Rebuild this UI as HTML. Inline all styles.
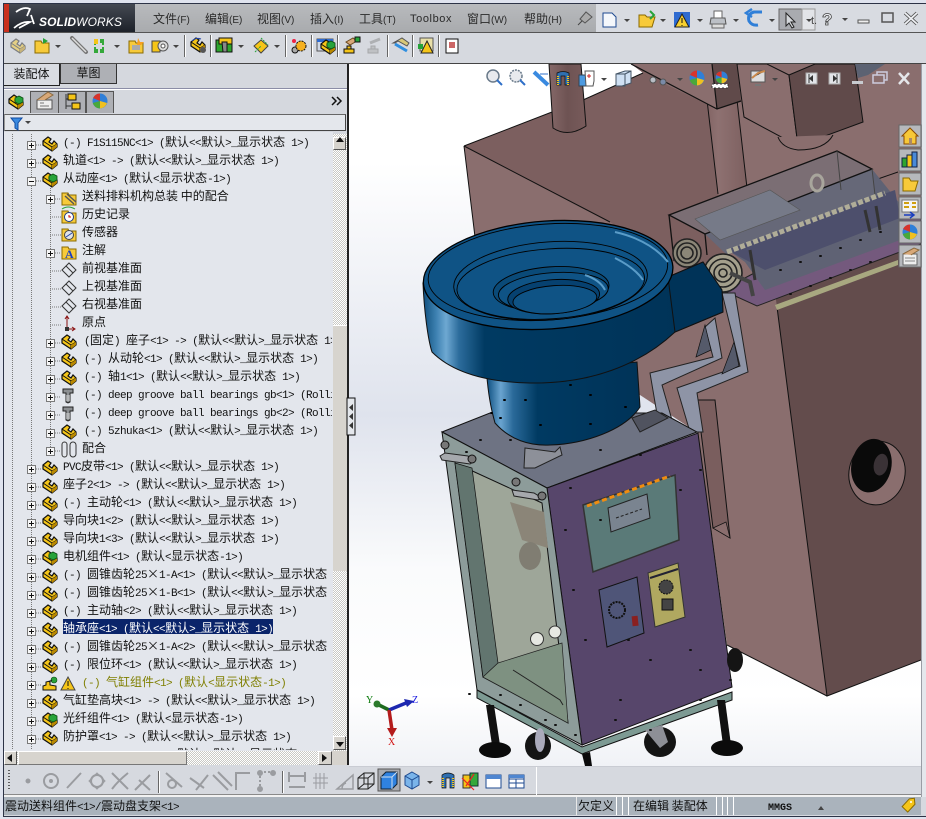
<!DOCTYPE html>
<html><head><meta charset="utf-8"><style>
html,body{margin:0;padding:0;width:926px;height:819px;overflow:hidden;background:#d6d9df}
body{position:relative;font-family:"Liberation Sans","WenQuanYi Zen Hei","Noto Sans CJK SC",sans-serif;color:#111}
.a{position:absolute}
.m{position:absolute;top:10px;font-size:12px;line-height:18px;color:#2a2a2a;white-space:nowrap}
.m i{font-style:normal;font-size:10px}
#tree{position:absolute;left:0;top:0;width:926px;height:819px;clip-path:inset(134px 594px 69px 5px);font-family:"WenQuanYi Zen Hei","Noto Sans CJK SC",sans-serif;font-size:12px;color:#111}
#tree div{position:absolute;height:18px;line-height:18px;white-space:pre}
#tree i,.st i{font:11px "Liberation Mono",monospace;letter-spacing:-.6px}
#tree b{display:inline-block;width:12px;text-align:center;font-weight:normal}
.st{position:absolute;font-family:"WenQuanYi Zen Hei","Noto Sans CJK SC",sans-serif;font-size:12px;line-height:16px;white-space:pre;color:#111}
.hatch{background:repeating-conic-gradient(#fff 0 25%,#c9c9c4 0 50%) 0 0/2px 2px}
</style></head><body>
<!-- window frame -->
<div class="a" style="left:0;top:0;width:926px;height:3px;background:#dfe3ee"></div>
<div class="a" style="left:0;top:3px;width:926px;height:1px;background:#2c3346"></div>
<div class="a" style="left:0;top:0;width:3px;height:819px;background:#dfe3ee"></div>
<div class="a" style="left:3px;top:3px;width:1px;height:814px;background:#2c3346"></div>
<div class="a" style="left:0;top:817px;width:926px;height:2px;background:#dfe3ee"></div>
<div class="a" style="left:3px;top:816px;width:923px;height:1px;background:#2c3346"></div>
<!-- title -->
<div class="a" style="left:135px;top:4px;width:461px;height:28px;background:linear-gradient(#b8babd,#a9abae)"></div>
<div class="a" style="left:596px;top:4px;width:330px;height:28px;background:#d8dbe1"></div>
<div class="a" style="left:4px;top:4px;width:131px;height:28px;background:linear-gradient(#444952,#1d2129)"></div>
<div class="a" style="left:4px;top:4px;width:5px;height:28px;background:#c9301f"></div>
<div class="a" style="left:39px;top:15px;font:bold italic 12px 'Liberation Sans',sans-serif;color:#fff;letter-spacing:.1px;white-space:nowrap">SOLID<span style="font-weight:normal">WORKS</span></div>
<div class="a" style="left:4px;top:32px;width:922px;height:1px;background:#555"></div>
<div class="m" style="left:153px">文件<i>(F)</i></div>
<div class="m" style="left:205px">编辑<i>(E)</i></div>
<div class="m" style="left:257px">视图<i>(V)</i></div>
<div class="m" style="left:310px">插入<i>(I)</i></div>
<div class="m" style="left:359px">工具<i>(T)</i></div>
<div class="m" style="left:410px;font-size:11px;letter-spacing:.6px">Toolbox</div>
<div class="m" style="left:467px">窗口<i>(W)</i></div>
<div class="m" style="left:524px">帮助<i>(H)</i></div>
<div class="a" style="left:4px;top:63px;width:922px;height:1px;background:#444"></div>
<!-- left panel -->
<div class="a" style="left:4px;top:64px;width:343px;height:702px;background:#d5d8de"></div>
<div class="a" style="left:347px;top:64px;width:2px;height:702px;background:#222"></div>
<div class="a" style="left:4px;top:64px;width:55px;height:21px;background:#d9dce2;border-right:1px solid #222;border-bottom:1px solid #222;box-sizing:content-box"></div>
<div class="a" style="left:60px;top:64px;width:55px;height:19px;background:#aeb0b5;border:1px solid #333;border-top:0;font:12px/19px 'WenQuanYi Zen Hei',sans-serif;text-align:center">草图</div>
<div class="a" style="left:4px;top:64px;width:55px;font:12px/21px 'WenQuanYi Zen Hei',sans-serif;text-align:center">装配体</div>
<div class="a" style="left:4px;top:88px;width:343px;height:1px;background:#8b8da6"></div>
<div class="a" style="left:4px;top:89px;width:343px;height:1px;background:#fff"></div>
<div class="a" style="left:30px;top:91px;width:27px;height:21px;background:#aeb0b5;border:1px solid #555;border-bottom:0"></div>
<div class="a" style="left:58px;top:91px;width:26px;height:21px;background:#aeb0b5;border:1px solid #555;border-bottom:0"></div>
<div class="a" style="left:86px;top:91px;width:26px;height:21px;background:#aeb0b5;border:1px solid #555;border-bottom:0"></div>
<div class="a" style="left:4px;top:114px;width:342px;height:17px;background:#e4e7ec;border-top:1px solid #666;border-bottom:1px solid #444;border-left:1px solid #999;border-right:1px solid #444;box-sizing:border-box"></div>
<div class="a" style="left:4px;top:132px;width:329px;height:619px;background:#e3e6ec"></div>
<!-- scrollbars -->
<div class="a hatch" style="left:333px;top:134px;width:14px;height:617px"></div>
<div class="a" style="left:333px;top:325px;width:14px;height:245px;background:#d7d4ce;border-top:1px solid #fff"></div>
<div class="a" style="left:333px;top:137px;width:13px;height:13px;background:#d6d3cd;border:1px solid;border-color:#fff #555 #555 #fff;box-sizing:border-box"></div>
<div class="a" style="left:333px;top:736px;width:13px;height:14px;background:#d6d3cd;border:1px solid;border-color:#fff #555 #555 #fff;box-sizing:border-box"></div>
<div class="a hatch" style="left:4px;top:751px;width:329px;height:14px"></div>
<div class="a" style="left:18px;top:751px;width:169px;height:14px;background:#d7d4ce;border:1px solid;border-color:#fff #777 #777 #fff;box-sizing:border-box"></div>
<div class="a" style="left:4px;top:751px;width:13px;height:14px;background:#d6d3cd;border:1px solid;border-color:#fff #555 #555 #fff;box-sizing:border-box"></div>
<div class="a" style="left:318px;top:751px;width:14px;height:14px;background:#d6d3cd;border:1px solid;border-color:#fff #555 #555 #fff;box-sizing:border-box"></div>
<div class="a" style="left:332px;top:751px;width:15px;height:14px;background:#d6d3cd"></div>
<!-- bottom -->
<div class="a" style="left:4px;top:765px;width:922px;height:32px;background:#d6d9df"></div>
<div class="a" style="left:4px;top:794px;width:922px;height:1px;background:#8a8a8a"></div>
<div class="a" style="left:4px;top:795px;width:922px;height:2px;background:#f2f2f2"></div>
<div class="a" style="left:536px;top:766px;width:1px;height:29px;background:#fff"></div>
<div class="a" style="left:4px;top:797px;width:917px;height:18px;background:#aab3bc"></div>
<div class="a" style="left:576px;top:797px;width:1px;height:18px;background:#e8e8e8"></div>
<div class="a" style="left:616px;top:797px;width:1px;height:18px;background:#fff"></div>
<div class="a" style="left:622px;top:797px;width:1px;height:18px;background:#fff"></div>
<div class="a" style="left:628px;top:797px;width:1px;height:18px;background:#fff"></div>
<div class="a" style="left:716px;top:797px;width:1px;height:18px;background:#fff"></div>
<div class="a" style="left:722px;top:797px;width:1px;height:18px;background:#fff"></div>
<div class="a" style="left:727px;top:797px;width:1px;height:18px;background:#fff"></div>
<div class="a" style="left:733px;top:797px;width:1px;height:18px;background:#fff"></div>
<div class="st" style="left:5px;top:798px">震动送料组件<i>&lt;1&gt;/</i>震动盘支架<i>&lt;1&gt;</i></div>
<div class="st" style="left:578px;top:798px">欠定义</div>
<div class="st" style="left:633px;top:798px">在编辑 装配体</div>
<div class="st" style="left:768px;top:798px"><i style="font-size:10px;font-weight:bold;letter-spacing:0">MMGS</i></div>

<!-- viewport scene -->
<svg class="a" style="left:349px;top:64px" width="572" height="702" viewBox="349 64 572 702" xmlns="http://www.w3.org/2000/svg">
<defs>
<linearGradient id="bg" x1="0" y1="64" x2="0" y2="766" gradientUnits="userSpaceOnUse"><stop offset="0" stop-color="#fff"/><stop offset=".14" stop-color="#fff"/><stop offset=".5" stop-color="#dfe3ed"/><stop offset=".72" stop-color="#fafbfc"/><stop offset=".9" stop-color="#fff"/><stop offset="1" stop-color="#f0f2f6"/></linearGradient>
<linearGradient id="bw" x1="423" y1="0" x2="680" y2="0" gradientUnits="userSpaceOnUse"><stop offset="0" stop-color="#0f4d7c"/><stop offset=".05" stop-color="#3c80b0"/><stop offset=".09" stop-color="#6ea8d2"/><stop offset=".14" stop-color="#2c6c9c"/><stop offset=".24" stop-color="#003a62"/><stop offset="1" stop-color="#003358"/></linearGradient>
<linearGradient id="nk" x1="487" y1="0" x2="640" y2="0" gradientUnits="userSpaceOnUse"><stop offset="0" stop-color="#0d4f80"/><stop offset=".09" stop-color="#6aa4cf"/><stop offset=".17" stop-color="#2a6a9a"/><stop offset=".33" stop-color="#003a62"/><stop offset="1" stop-color="#003358"/></linearGradient>
<linearGradient id="col" x1="700" y1="0" x2="745" y2="0" gradientUnits="userSpaceOnUse"><stop offset="0" stop-color="#7a5c5c"/><stop offset=".4" stop-color="#8e7171"/><stop offset="1" stop-color="#7e6161"/></linearGradient>
<linearGradient id="pole" x1="549" y1="0" x2="586" y2="0" gradientUnits="userSpaceOnUse"><stop offset="0" stop-color="#856868"/><stop offset=".5" stop-color="#6e5353"/><stop offset="1" stop-color="#785b5b"/></linearGradient>
</defs>
<rect x="349" y="64" width="572" height="702" fill="url(#bg)"/>
<!-- big brown -->
<path d="M464 146L660 64H921V660L827 696L727 645L698 433L640 395L500 400L475 237Z" fill="#8a6e6e"/>
<path d="M464 146L643 73L631 64H640L667 85L717 109L718 193L735 300L610 222Z" fill="#7c5f5f"/>
<path d="M631 64L716 108L741 101L737 64Z" fill="#8a6e6e"/>
<path d="M583 64H631L643 73L583 100Z" fill="#fff"/>
<path d="M349 64H583V100L464 146L475 237L420 237V300H349Z" fill="url(#bg)"/>
<path d="M464 146L583 100L643 73" fill="none" stroke="#111" stroke-width="1"/>
<path d="M464 146L610 222M464 146L475 237" fill="none" stroke="#111"/>
<!-- pole -->
<path d="M549 64L553 128Q568 138 586 126L581 64Z" fill="url(#pole)" stroke="#111"/>
<!-- column -->
<path d="M707 100L718 194L747 188L737 100Z" fill="url(#col)"/>
<path d="M707 100L718 194M737 100L747 188" stroke="#111" fill="none"/>
<!-- upper blocks -->
<path d="M631 64L717 109L741 101L737 64Z" fill="#8a6e6e"/>
<path d="M712 64L717 109L741 101L737 64Z" fill="#604a4a"/>
<path d="M631 64L717 109L741 101M712 64L717 109" stroke="#111" fill="none" stroke-width="1.200"/>
<path d="M737 64L744 117L798 146L789 75L767 64Z" fill="#8a6e6e" stroke="#111"/>
<path d="M789 75L798 146L863 122L855 64H815Z" fill="#604a4a" stroke="#111"/>
<path d="M778 137Q782 148 798 150Q825 150 833 135" fill="#8a6e6e" stroke="#111"/>
<path d="M855 64L885 64L868 75L858 78Z" fill="#5c6272"/>
<!-- right dark face -->
<path d="M775 292L921 235V660L827 696Z" fill="#634c4c"/>
<path d="M777 307L827 696L921 660M727 645L827 696" stroke="#111" fill="none"/>
<path d="M875 180L898 172" stroke="#111"/>
<!-- slab -->
<path d="M697 400L713 528L730 538L715 400Z" fill="#7a5e5e" stroke="#111"/>
<path d="M713 528L726 522L730 538Z" fill="#8a6e6e" stroke="#111" stroke-width=".7"/>
<!-- hole -->
<g transform="rotate(12 877 473)"><ellipse cx="877" cy="473" rx="28" ry="32" fill="#8a6e6e" stroke="#111"/><ellipse cx="870" cy="467" rx="20" ry="27" fill="#0a0a0a"/><ellipse cx="879" cy="464" rx="7" ry="11" fill="#3a3236"/></g>
<!-- plate & conveyor -->
<path d="M722 290L757 306L921 244V214L898 218L760 270Z" fill="#74597d" stroke="#222"/>
<path d="M775 305L898 260V265L777 310Z" fill="#a8a880"/>
<path d="M669 215L837 151L872 169L905 210L900 240L765 290L745 262L705 234Z" fill="#5f6274"/>
<path d="M705 234L872 169L875 195L727 255Z" fill="#666878"/>
<path d="M727 250L895 190L900 218L765 270Z" fill="#4d4f6c"/>
<path d="M669 215L837 151L872 169L705 234Z" fill="#7b6e74" stroke="#111" stroke-width="1.300"/>
<path d="M669 215L674 260L690 250M705 234L707 255" fill="none" stroke="#111" stroke-width="1.300"/>
<path d="M837 151L841 190M872 169L875 195" stroke="#444"/>
<path d="M695 219L770 190L800 210L720 240Z" fill="#767a88" stroke="#555" stroke-width=".6"/>
<ellipse cx="817" cy="183" rx="6" ry="8" fill="none" stroke="#a8a59c" stroke-width="3"/>
<path d="M727 252L885 193" stroke="#b0ad98" stroke-width="5" stroke-dasharray="5 2"/>
<g fill="none" stroke="#222" stroke-width="1.600">
<circle cx="687" cy="253" r="14" fill="#8b8677"/><circle cx="687" cy="253" r="10"/><circle cx="687" cy="253" r="6"/>
<circle cx="723" cy="273" r="19" fill="#a49f8c"/><circle cx="723" cy="273" r="14"/><circle cx="723" cy="273" r="9"/><circle cx="723" cy="273" r="4"/>
</g>
<path d="M730 273L750 282L753 296" fill="none" stroke="#444" stroke-width="4"/>
<path d="M750 250L755 280M865 210L870 232M876 206L880 230" stroke="#333" stroke-width="3"/>
<path d="M790 294h1M810 286h1M830 278h1M850 270h1M870 262h1M780 270h1M800 262h1M820 256h1M840 248h1M860 240h1M880 232h1" stroke="#111" stroke-width="2" stroke-linecap="round"/>
<!-- brackets -->
<path d="M650 373L713 357L705 327L715 318L722 358L662 385L672 420L658 420Z" fill="#8e94a6" stroke="#222"/>
<path d="M722 293L735 293L748 372L697 393L703 432L690 432L677 388L740 366Z" fill="#8e94a6" stroke="#222"/>
<path d="M696 357L705 325L711 350Z" fill="#555a6a" stroke="#111" stroke-width=".7"/>
<path d="M722 374L734 342L739 366Z" fill="#555a6a" stroke="#111" stroke-width=".7"/>
<!-- cabinet -->
<path d="M442 432L490 413H662L697 432L547 488Z" fill="#6e7383" stroke="#111"/>
<path d="M547 488L698 433L732 687L582 745Z" fill="#57466b" stroke="#111"/>
<path d="M442 432L547 488L582 745L477 690Z" fill="#8d9c9a" stroke="#111"/>
<path d="M455 463L542 503L568 723L483 677Z" fill="#9ea699" stroke="#111"/>
<path d="M455 463L472 468L498 663L483 677Z" fill="#62756f" stroke="#111" stroke-width=".7"/>
<path d="M498 663L562 643L568 723L483 677Z" fill="#7e9181" stroke="#222" stroke-width=".7"/>
<path d="M513 670L560 700L563 705" fill="none" stroke="#222"/>
<path d="M510 502L544 512L548 548L522 540Z" fill="#8b8578"/>
<ellipse cx="530" cy="556" rx="11" ry="14" fill="#807d72"/>
<circle cx="537" cy="639" r="6.500" fill="#e6e8e2" stroke="#333"/><circle cx="555" cy="632" r="6" fill="#e6e8e2" stroke="#333"/>
<path d="M477 690L582 747L732 692V700L582 754L477 698Z" fill="#7d9a93" stroke="#111"/>
<!-- handles -->
<path d="M440 456L445 453L468 456L473 462L470 464L442 460Z" fill="#a6a9ad" stroke="#222"/>
<path d="M512 490L534 493L542 498L538 500L514 496Z" fill="#a6a9ad" stroke="#222"/>
<circle cx="445" cy="445" r="4" fill="#777" stroke="#111"/><circle cx="472" cy="459" r="4" fill="#777" stroke="#111"/><circle cx="516" cy="482" r="4" fill="#777" stroke="#111"/><circle cx="542" cy="496" r="4" fill="#777" stroke="#111"/>
<path d="M525 448L555 452L560 447L562 455L535 468H524Z" fill="#8d9099" stroke="#222"/>
<path d="M632 418L655 410L668 418L640 432Z" fill="#50535f" stroke="#222"/>
<!-- panels -->
<path d="M583 505L675 475L679 540L593 572Z" fill="#5a7a78" stroke="#333" stroke-width="1.500"/>
<path d="M587 506L670 476" stroke="#f08c10" stroke-width="3" stroke-dasharray="5 3"/>
<path d="M608 508L647 494L650 518L611 532Z" fill="#7a8490" stroke="#222"/>
<path d="M616 518L642 509" stroke="#222" stroke-dasharray="3 2"/>
<path d="M599 590L637 577L644 633L607 647Z" fill="#4f5578" stroke="#111"/>
<circle cx="617" cy="610" r="8" fill="none" stroke="#111" stroke-width="2" stroke-dasharray="2 1"/>
<rect x="632" y="616" width="6" height="10" fill="#8a2020" transform="rotate(-6 635 620)"/>
<path d="M648 573L678 563L685 617L655 627Z" fill="#b0a860" stroke="#333"/>
<path d="M650 578L678 569" stroke="#223" stroke-width="2"/>
<circle cx="666" cy="587" r="7" fill="#444" stroke="#111" stroke-dasharray="2 1"/>
<rect x="662" y="599" width="11" height="11" fill="#444" stroke="#111"/>
<!-- feet -->
<path d="M486 705L492 745H500L494 705Z" fill="#111"/><ellipse cx="495" cy="750" rx="16" ry="8" fill="#0b0b0b"/>
<path d="M717 700L723 745H731L725 700Z" fill="#111"/><ellipse cx="727" cy="748" rx="16" ry="8" fill="#0b0b0b"/>
<ellipse cx="538" cy="746" rx="13" ry="14" fill="#141414"/><ellipse cx="540" cy="740" rx="5" ry="12" fill="#aab"/>
<ellipse cx="660" cy="742" rx="16" ry="15" fill="#141414"/><path d="M645 730L662 725L668 742L660 748Z" fill="#8d8f96"/>
<ellipse cx="735" cy="660" rx="8" ry="12" fill="#141414"/>
<path d="M582 754L585 766H592L590 752Z" fill="#0a0a0a"/>
<path d="M469 694h1M500 695h1M520 705h1M545 720h1M555 725h1M575 735h1M600 520h1M565 530h1M573 590h1M585 640h1M628 640h1M650 660h1M690 650h1M700 670h1M730 680h1M620 700h1M615 720h1M650 730h1M700 700h1M680 490h1M700 470h1M570 488h1M600 450h1M640 455h1M510 440h1M466 452h1M480 440h1" stroke="#111" stroke-width="2" stroke-linecap="round"/>
<!-- bowl -->
<path d="M487 378C489 400 492 412 495 423C510 440 530 446 550 445C585 444 625 430 640 407L637 362Z" fill="url(#nk)" stroke="#111"/>
<path d="M423 283C424 310 428 340 432 352C450 370 480 382 530 383C590 384 640 365 675 332L723 312L722 290L703 262L668 277Z" fill="url(#bw)" stroke="#111"/>
<path d="M668 277L703 262L722 290L723 312L675 332Z" fill="#003358" stroke="#111"/>
<g transform="rotate(-4 548 273)" fill="#0f5385" stroke="#000" stroke-width=".9">
<ellipse cx="548" cy="275" rx="125" ry="54" stroke-width="1.300"/>
<ellipse cx="548" cy="272" rx="120" ry="48"/>
<ellipse cx="550" cy="281" rx="97" ry="39"/><ellipse cx="550" cy="284" rx="94" ry="35"/>
<ellipse cx="550" cy="289" rx="58" ry="22" fill="#0a4a78"/><ellipse cx="552" cy="292" rx="55" ry="19"/>
<ellipse cx="552" cy="297" rx="46" ry="17" fill="#064170"/><ellipse cx="553" cy="300" rx="42" ry="14"/>
</g>
<path d="M615 232Q650 240 668 262M615 258Q635 268 643 280M585 275Q600 280 605 290" fill="none" stroke="#5a9cc8" stroke-width="2"/>
<path d="M504 400h1M525 400h1M570 385h1M590 395h1M625 407h1M540 425h1M590 424h1M500 418h1M491 413h1" stroke="#000" stroke-width="2" stroke-linecap="round"/>
<!-- triad -->
<path d="M389 710L377 704" stroke="#1e6a1e" stroke-width="3.500"/><circle cx="377" cy="704" r="3.500" fill="#2c7a2c"/>
<path d="M389 710L406 703" stroke="#1d28b0" stroke-width="3.500"/><path d="M404 699L414 701L407 707Z" fill="#1d28b0"/>
<path d="M389 710L392 730" stroke="#b41c1c" stroke-width="3.500"/><path d="M387 728L397 728L392 737Z" fill="#b41c1c"/>
<text x="366" y="703" font-family="Liberation Serif,serif" font-size="10" fill="#0a7a0a">Y</text>
<text x="412" y="703" font-family="Liberation Serif,serif" font-size="10" fill="#1a1ae0">Z</text>
<text x="388" y="745" font-family="Liberation Serif,serif" font-size="10" fill="#d01010">X</text>
</svg>
<div class="a" style="left:921px;top:64px;width:1px;height:733px;background:#9a9da5"></div>
<div class="a" style="left:922px;top:64px;width:4px;height:733px;background:#e4e7ec"></div>
<div class="a" style="left:349px;top:766px;width:572px;height:1px;background:#c9ccd3"></div>

<!-- tree text -->
<div id="tree">
<div style="left:63px;top:133px"><i>(-) F1S115NC&lt;1&gt; (</i>默认<i>&lt;&lt;</i>默认<i>&gt;_</i>显示状态<i> 1&gt;)</i></div>
<div style="left:63px;top:151px">轨道<i>&lt;1&gt; -&gt; (</i>默认<i>&lt;&lt;</i>默认<i>&gt;_</i>显示状态<i> 1&gt;)</i></div>
<div style="left:63px;top:169px">从动座<i>&lt;1&gt; (</i>默认<i>&lt;</i>显示状态<i>-1&gt;)</i></div>
<div style="left:82px;top:187px">送料排料机构总装 中的配合</div>
<div style="left:82px;top:205px">历史记录</div>
<div style="left:82px;top:223px">传感器</div>
<div style="left:82px;top:241px">注解</div>
<div style="left:82px;top:259px">前视基准面</div>
<div style="left:82px;top:277px">上视基准面</div>
<div style="left:82px;top:295px">右视基准面</div>
<div style="left:82px;top:313px">原点</div>
<div style="left:84px;top:331px"><i>(</i>固定<i>) </i>座子<i>&lt;1&gt; -&gt; (</i>默认<i>&lt;&lt;</i>默认<i>&gt;_</i>显示状态<i> 1&gt;)</i></div>
<div style="left:84px;top:349px"><i>(-) </i>从动轮<i>&lt;1&gt; (</i>默认<i>&lt;&lt;</i>默认<i>&gt;_</i>显示状态<i> 1&gt;)</i></div>
<div style="left:84px;top:367px"><i>(-) </i>轴<i>1&lt;1&gt; (</i>默认<i>&lt;&lt;</i>默认<i>&gt;_</i>显示状态<i> 1&gt;)</i></div>
<div style="left:84px;top:385px"><i>(-) deep groove ball bearings gb&lt;1&gt; (Rolli</i></div>
<div style="left:84px;top:403px"><i>(-) deep groove ball bearings gb&lt;2&gt; (Rolli</i></div>
<div style="left:84px;top:421px"><i>(-) 5zhuka&lt;1&gt; (</i>默认<i>&lt;&lt;</i>默认<i>&gt;_</i>显示状态<i> 1&gt;)</i></div>
<div style="left:82px;top:439px">配合</div>
<div style="left:63px;top:457px"><i>PVC</i>皮带<i>&lt;1&gt; (</i>默认<i>&lt;&lt;</i>默认<i>&gt;_</i>显示状态<i> 1&gt;)</i></div>
<div style="left:63px;top:475px">座子<i>2&lt;1&gt; -&gt; (</i>默认<i>&lt;&lt;</i>默认<i>&gt;_</i>显示状态<i> 1&gt;)</i></div>
<div style="left:63px;top:493px"><i>(-) </i>主动轮<i>&lt;1&gt; (</i>默认<i>&lt;&lt;</i>默认<i>&gt;_</i>显示状态<i> 1&gt;)</i></div>
<div style="left:63px;top:511px">导向块<i>1&lt;2&gt; (</i>默认<i>&lt;&lt;</i>默认<i>&gt;_</i>显示状态<i> 1&gt;)</i></div>
<div style="left:63px;top:529px">导向块<i>1&lt;3&gt; (</i>默认<i>&lt;&lt;</i>默认<i>&gt;_</i>显示状态<i> 1&gt;)</i></div>
<div style="left:63px;top:547px">电机组件<i>&lt;1&gt; (</i>默认<i>&lt;</i>显示状态<i>-1&gt;)</i></div>
<div style="left:63px;top:565px"><i>(-) </i>圆锥齿轮<i>25</i><b>×</b><i>1-A&lt;1&gt; (</i>默认<i>&lt;&lt;</i>默认<i>&gt;_</i>显示状态</div>
<div style="left:63px;top:583px"><i>(-) </i>圆锥齿轮<i>25</i><b>×</b><i>1-B&lt;1&gt; (</i>默认<i>&lt;&lt;</i>默认<i>&gt;_</i>显示状态</div>
<div style="left:63px;top:601px"><i>(-) </i>主动轴<i>&lt;2&gt; (</i>默认<i>&lt;&lt;</i>默认<i>&gt;_</i>显示状态<i> 1&gt;)</i></div>
<div style="left:63px;top:619px;width:210px;height:15px;line-height:17px;background:#0a246a;color:#fff">轴承座<i>&lt;1&gt; (</i>默认<i>&lt;&lt;</i>默认<i>&gt;_</i>显示状态<i> 1&gt;)</i></div>
<div style="left:63px;top:637px"><i>(-) </i>圆锥齿轮<i>25</i><b>×</b><i>1-A&lt;2&gt; (</i>默认<i>&lt;&lt;</i>默认<i>&gt;_</i>显示状态</div>
<div style="left:63px;top:655px"><i>(-) </i>限位环<i>&lt;1&gt; (</i>默认<i>&lt;&lt;</i>默认<i>&gt;_</i>显示状态<i> 1&gt;)</i></div>
<div style="left:82px;top:673px;color:#7f7f00"><i>(-) </i>气缸组件<i>&lt;1&gt; (</i>默认<i>&lt;</i>显示状态<i>-1&gt;)</i></div>
<div style="left:63px;top:691px">气缸垫高块<i>&lt;1&gt; -&gt; (</i>默认<i>&lt;&lt;</i>默认<i>&gt;_</i>显示状态<i> 1&gt;)</i></div>
<div style="left:63px;top:709px">光纤组件<i>&lt;1&gt; (</i>默认<i>&lt;</i>显示状态<i>-1&gt;)</i></div>
<div style="left:63px;top:727px">防护罩<i>&lt;1&gt; -&gt; (</i>默认<i>&lt;&lt;</i>默认<i>&gt;_</i>显示状态<i> 1&gt;)</i></div>
<div style="left:63px;top:745px"><i>MXH10-20-SF&lt;1&gt; -&gt; (</i>默认<i>&lt;&lt;</i>默认<i>&gt;_</i>显示状态<i> 1&gt;)</i></div>
</div>

<!-- overlay icons -->
<svg class="a" style="left:0;top:0;pointer-events:none" width="926" height="819" viewBox="0 0 926 819" xmlns="http://www.w3.org/2000/svg">
<defs>
<g id="p"><path d="M1 5L6 1L9 3L7 6L10 8L12 5L15 8V11L10 15L1 9Z" fill="#f5c518" stroke="#111" stroke-width="1.200"/><path d="M1 5L10 11V15M10 11L15 8" fill="none" stroke="#111"/><path d="M10 11V15L15 11V8Z" fill="#b98800"/></g>
<g id="as"><use href="#p"/><path d="M7 4L11 2L15 4V8L11 10L7 8Z" fill="#27a33a" stroke="#0a4a10" stroke-width=".8"/></g>
<g id="b"><rect x=".5" y=".5" width="8" height="8" fill="#f6f6f6" stroke="#7a7a7a"/><path d="M2 4.500H7M4.500 2V7" stroke="#111"/></g>
<g id="bm"><rect x=".5" y=".5" width="8" height="8" fill="#f6f6f6" stroke="#7a7a7a"/><path d="M2 4.500H7" stroke="#111"/></g>
<g id="f"><path d="M1 3H7L8 5H15V15H1Z" fill="#f7ca3a" stroke="#8a6a00"/></g>
<g id="pl"><path d="M8 1L15 8L8 15L1 8Z" fill="none" stroke="#333"/><path d="M5 4L12 11" stroke="#333"/></g>
<g id="sc"><path d="M2 1H12V5H9V14L7 15L5 14V5H2Z" fill="#8c8f92" stroke="#222"/><path d="M5 8H9M5 10H9M5 12H9" stroke="#ddd"/></g>
<g id="dn"><path d="M0 0H6L3 3Z" fill="#444"/></g>
<g id="gb"><circle cx="8" cy="8" r="7.500" fill="#2f7fd8"/><path d="M8 8L1 5A7.500 7.500 0 0 1 8 .5Z" fill="#d7342b"/><path d="M8 8V15.500A7.500 7.500 0 0 1 .8 10Z" fill="#49a83a"/><path d="M8 8L15 10A7.500 7.500 0 0 1 8 15.500Z" fill="#f0c020"/></g>
<g id="sep"><path d="M.5 0V22" stroke="#666"/><path d="M1.500 0V22" stroke="#fff"/></g>
</defs>
<!-- dots -->
<g stroke="#7a7a7a" stroke-dasharray="1 1" fill="none">
<path d="M12.500 134V750M31.500 134V750M50.500 188V452"/>
<path d="M36 145h6M36 163h6M36 181h6M36 469h6M36 487h6M36 505h6M36 523h6M36 541h6M36 559h6M36 577h6M36 595h6M36 613h6M36 631h6M36 649h6M36 667h6M36 685h6M36 703h6M36 721h6M36 739h6"/>
<path d="M55 199h6M50 217h11M50 235h11M55 253h6M50 271h11M50 289h11M50 307h11M50 325h11M55 343h6M55 361h6M55 379h6M55 397h6M55 415h6M55 433h6M55 451h6"/>
</g>
<use href="#b" x="27" y="141"/><use href="#b" x="27" y="159"/><use href="#bm" x="27" y="177"/>
<use href="#b" x="27" y="465"/><use href="#b" x="27" y="483"/><use href="#b" x="27" y="501"/><use href="#b" x="27" y="519"/><use href="#b" x="27" y="537"/><use href="#b" x="27" y="555"/><use href="#b" x="27" y="573"/><use href="#b" x="27" y="591"/><use href="#b" x="27" y="609"/><use href="#b" x="27" y="627"/><use href="#b" x="27" y="645"/><use href="#b" x="27" y="663"/><use href="#b" x="27" y="681"/><use href="#b" x="27" y="699"/><use href="#b" x="27" y="717"/><use href="#b" x="27" y="735"/>
<use href="#b" x="46" y="195"/><use href="#b" x="46" y="249"/><use href="#b" x="46" y="339"/><use href="#b" x="46" y="357"/><use href="#b" x="46" y="375"/><use href="#b" x="46" y="393"/><use href="#b" x="46" y="411"/><use href="#b" x="46" y="429"/><use href="#b" x="46" y="447"/>
<use href="#p" x="42" y="136"/><use href="#p" x="42" y="154"/><use href="#as" x="42" y="172"/>
<use href="#p" x="42" y="460"/><use href="#p" x="42" y="478"/><use href="#p" x="42" y="496"/><use href="#p" x="42" y="514"/><use href="#p" x="42" y="532"/><use href="#as" x="42" y="550"/><use href="#p" x="42" y="568"/><use href="#p" x="42" y="586"/><use href="#p" x="42" y="604"/><use href="#p" x="42" y="622"/><use href="#p" x="42" y="640"/><use href="#p" x="42" y="658"/><use href="#p" x="42" y="694"/><use href="#as" x="42" y="712"/><use href="#p" x="42" y="730"/>
<g transform="translate(42 676)"><path d="M1 14V10L4 9V6L8 5V9L14 10V14Z" fill="#f5c518" stroke="#111"/><circle cx="12" cy="4" r="3" fill="#27a33a" stroke="#0a4a10" stroke-width=".6"/><path d="M7 6L10 4" stroke="#111"/></g>
<path d="M68 677L75 690H61Z" fill="#f5c518" stroke="#444"/><path d="M68 681V686M68 688V689" stroke="#111"/>
<use href="#p" x="61" y="334"/><use href="#p" x="61" y="352"/><use href="#p" x="61" y="370"/><use href="#p" x="61" y="424"/>
<use href="#sc" x="61" y="388"/><use href="#sc" x="61" y="406"/>
<use href="#f" x="61" y="190"/><path d="M65 196L74 204M67 194L76 202" stroke="#555" stroke-width="1.500"/>
<use href="#f" x="61" y="208"/><circle cx="69" cy="217" r="4.500" fill="#fff" stroke="#1a3a8a"/><path d="M69 215V217H71" stroke="#c00" fill="none"/><path d="M62 209Q68 205 75 209" stroke="#27a33a" fill="none"/>
<use href="#f" x="61" y="226"/><circle cx="69" cy="235" r="4.500" fill="#dfe3e8" stroke="#444"/><path d="M66 237L72 233" stroke="#24a"/>
<use href="#f" x="61" y="244"/><text x="65" y="258" font-family="Liberation Serif,serif" font-size="12" font-weight="bold" fill="#1a3ec0">A</text>
<use href="#pl" x="61" y="262"/><use href="#pl" x="61" y="280"/><use href="#pl" x="61" y="298"/>
<path d="M67 316V329H74" fill="none" stroke="#8a1010"/><path d="M65 319L67 316L69 319M72 327L75 329L72 331" fill="none" stroke="#8a1010"/><path d="M65 327h4v4h-4z" fill="#333"/>
<rect x="62" y="442" width="5" height="15" rx="2.500" fill="none" stroke="#333"/><rect x="70" y="442" width="6" height="15" rx="3" fill="none" stroke="#333"/>
<!-- panel tabs -->
<use href="#as" x="8" y="94"/>
<rect x="37" y="100" width="15" height="9" fill="#eee" stroke="#555"/><path d="M37 100L48 92L53 95L45 100" fill="#d8a878" stroke="#8a6a40"/><path d="M40 103h4M40 106h9" stroke="#777"/>
<path d="M66 94v15M66 99h5M66 106h5" stroke="#333" fill="none"/><rect x="68" y="94" width="8" height="6" fill="#f5c518" stroke="#111"/><rect x="72" y="103" width="8" height="6" fill="#f5c518" stroke="#111"/>
<use href="#gb" x="92" y="93"/>
<path d="M332 97L336 101L332 105M337 97L341 101L337 105" stroke="#111" stroke-width="1.500" fill="none"/>
<path d="M11 118H22L18 123V130L15 128V123Z" fill="#3a8ae0" stroke="#0f4aa0"/><use href="#dn" x="25" y="121"/>
<path d="M336 142L340 137L344 142Z" fill="#111"/><path d="M336 742L340 747L344 742Z" fill="#111"/>
<path d="M12 754V762L7 758Z" fill="#111"/><path d="M322 754V762L327 758Z" fill="#111"/>
<!-- splitter grabber -->
<rect x="347" y="398" width="8" height="37" fill="#e4e7ec" stroke="#111"/><path d="M353 404V411L349 407.500ZM353 413V420L349 416.500ZM353 422V429L349 425.500Z" fill="#333"/>
<!-- logo -->
<path d="M16 12Q24 6 30 9L27 16M14 28Q22 21 30 22L19 28M31 15L34 24" stroke="#fff" stroke-width="1.800" fill="none"/>
<!-- pin -->
<path d="M580 19L586 12L592 17L585 23Z" fill="#aaa" stroke="#555"/><path d="M578 25L582 21" stroke="#444"/>
<!-- title icons -->
<path d="M603 13H612L616 17V27H603Z" fill="#f4f7fb" stroke="#1e4a90"/><use href="#dn" x="624" y="19"/>
<path d="M639 15H645L647 17H655L652 27H639Z" fill="#f7ca3a" stroke="#8a6a00"/><path d="M650 11L654 15L650 19" fill="none" stroke="#27a33a" stroke-width="2"/><use href="#dn" x="660" y="19"/>
<rect x="674" y="12" width="16" height="15" fill="#2f6bd0"/><path d="M682 14L689 27H675Z" fill="#f7d030" stroke="#222"/><path d="M682 18V23M682 25V26" stroke="#111"/><use href="#dn" x="697" y="19"/>
<path d="M711 18H725L726 24H710Z" fill="#bcc0c6" stroke="#555"/><path d="M714 11H722V18H714Z" fill="#fff" stroke="#666"/><path d="M712 24H724V28H712Z" fill="#ddd" stroke="#666"/><use href="#dn" x="733" y="19"/>
<path d="M762 12H754Q747 14 749 21Q752 26 758 25" fill="none" stroke="#2f7fd8" stroke-width="3"/><path d="M752 9L746 13L752 17" fill="none" stroke="#2f7fd8" stroke-width="2.500"/><use href="#dn" x="769" y="19"/>
<rect x="779" y="9" width="23" height="21" fill="#a9abb0" stroke="#666"/><rect x="802" y="9" width="13" height="21" fill="#e2e4e8" stroke="#999"/>
<path d="M786 13V26L789 23L792 28L794 27L791 22H795Z" fill="#d4d7db" stroke="#222"/><use href="#dn" x="806" y="19"/>
<text x="811" y="24" font-family="Liberation Sans,sans-serif" font-size="11" fill="#444">t.</text>
<text x="822" y="25" font-family="Liberation Sans,sans-serif" font-size="17" font-weight="bold" fill="#eef0f4" stroke="#444" stroke-width=".8">?</text>
<use href="#dn" x="842" y="18"/>
<rect x="858" y="20" width="11" height="3" fill="#eee" stroke="#555"/>
<rect x="882" y="13" width="11" height="9" fill="none" stroke="#555" stroke-width="1.500"/>
<path d="M905 13L917 24M917 13L905 24" stroke="#555" stroke-width="3.500"/><path d="M905 13L917 24M917 13L905 24" stroke="#eef0f4" stroke-width="1.800"/>
<!-- toolbar 2 -->
<g opacity=".45"><use href="#p" x="10" y="38"/></g>
<g transform="translate(34 38)"><use href="#f" /><path d="M9 0L14 3L9 6Z" fill="#27a33a"/></g><use href="#dn" x="55" y="45"/>
<path d="M72 38L86 52" stroke="#777" stroke-width="4" stroke-linecap="round"/><path d="M72 38L86 52" stroke="#ddd" stroke-width="1.500"/>
<path d="M94 39h4v4h-2v2h-2zM104 39h-4v4h2v2h2zM94 53h4v-4h-2v-2h-2zM104 53h-4v-4h2v-2h2z" fill="#34a83a"/><rect x="94" y="39" width="4" height="5" fill="#f5c518"/><use href="#dn" x="114" y="45"/>
<g transform="translate(128 38)"><use href="#f"/><path d="M10 0L12 4L16 4L13 7H9Z" fill="#f8a020"/><rect x="4" y="7" width="8" height="5" fill="#aaa"/></g>
<g transform="translate(151 38)"><rect x="1" y="3" width="8" height="11" fill="#f5c518" stroke="#444"/><circle cx="12" cy="8" r="5" fill="#ddd" stroke="#555"/><circle cx="12" cy="8" r="2" fill="#fff" stroke="#555"/></g><use href="#dn" x="173" y="45"/>
<use href="#sep" x="184" y="35"/>
<g transform="translate(190 37)"><use href="#p"/><path d="M2 4Q6 0 11 2" stroke="#24a" fill="none"/><circle cx="13" cy="13" r="3" fill="#555"/></g>
<use href="#sep" x="210" y="35"/>
<g transform="translate(216 37)"><rect x="0" y="3" width="16" height="12" fill="#2da52d" stroke="#111"/><rect x="3" y="1" width="13" height="6" fill="#f5c518" stroke="#111"/><path d="M6 5H11V15H7Z" fill="#888" stroke="#111"/></g><use href="#dn" x="238" y="45"/>
<g transform="translate(253 38)"><path d="M1 8L8 2L15 8L8 15Z" fill="#f5c518" stroke="#444"/><path d="M8 0L15 7M2 14L8 8" stroke="#27a33a" stroke-dasharray="2 1"/></g><use href="#dn" x="274" y="45"/>
<use href="#sep" x="285" y="35"/>
<g transform="translate(291 38)"><circle cx="4" cy="12" r="3" fill="#aaa" stroke="#111"/><circle cx="10" cy="8" r="5" fill="#f5b020" stroke="#111" stroke-dasharray="2 1"/><circle cx="3" cy="3" r="2" fill="#e24"/></g>
<use href="#sep" x="311" y="35"/>
<g transform="translate(317 37)"><rect x="0" y="2" width="16" height="12" fill="#cfd7e6" stroke="#555"/><rect x="0" y="2" width="16" height="3" fill="#2f6bd0"/><use href="#as" x="3" y="2"/></g>
<use href="#sep" x="337" y="35"/>
<g transform="translate(343 37)"><path d="M1 12H11V16H1ZM4 9H8V12H4Z" fill="#f5c518" stroke="#111"/><path d="M3 5L10 1L14 4L7 8Z" fill="#d8a878" stroke="#6a4a20"/><rect x="12" y="0" width="5" height="5" fill="#27a33a" stroke="#111"/></g>
<g transform="translate(367 37)" opacity=".5"><path d="M1 12H11V16H1ZM4 9H8V12H4Z" fill="#aaa" stroke="#777"/><path d="M3 6L13 2" stroke="#888" stroke-width="3"/></g>
<use href="#sep" x="387" y="35"/>
<g transform="translate(392 37)"><path d="M1 6L10 1L17 6L15 9L6 4L3 6Z" fill="#d8c878" stroke="#555"/><path d="M3 7L15 14" stroke="#2f8fe0" stroke-width="3"/></g>
<use href="#sep" x="412" y="35"/>
<g transform="translate(418 37)"><rect x="2" y="1" width="13" height="13" fill="#e8dfa8" stroke="#555"/><path d="M9 4L15 16H3Z" fill="#f5c518" stroke="#222"/><rect x="0" y="7" width="5" height="5" fill="#27a33a"/></g>
<use href="#sep" x="438" y="35"/>
<rect x="446" y="39" width="12" height="14" fill="#fff" stroke="#111"/><rect x="449" y="42" width="6" height="6" fill="#c66"/>
<!-- viewport HUD -->
<g fill="none" stroke="#6a7a8a"><circle cx="493" cy="76" r="6" fill="#e8eaee" stroke-width="1.500"/><circle cx="516" cy="76" r="6" fill="#e8eaee" stroke-width="1.500" stroke-dasharray="2 1"/></g>
<path d="M497 80L502 85M520 80L525 85" stroke="#2f6fc8" stroke-width="2"/>
<path d="M534 72L548 85" stroke="#3a8ae0" stroke-width="4"/><path d="M540 74H548" stroke="#2f6fc8"/>
<path d="M557 73Q563 70 569 73V85H565V76H561V85H557Z" fill="#2f6fb0" stroke="#111" stroke-width=".7"/><path d="M558 76V85M568 76V85" stroke="#f5c518" stroke-dasharray="1 1" stroke-width="2"/>
<path d="M579 75H593V86H579Z" fill="#4d9ae0" stroke="#345"/><path d="M585 71H594V81L593 86H586Z" fill="#fff" stroke="#555"/><path d="M589 74V78M587 76H591" stroke="#c22"/>
<use href="#dn" x="601" y="78"/>
<path d="M616 74L625 71H631V83L622 86H616Z" fill="#cfe0f3" stroke="#456"/><path d="M616 74H625V86H616Z" fill="none" stroke="#456"/><path d="M625 74L631 71" stroke="#456"/>
<circle cx="653" cy="80" r="3" fill="#b8bcc4" stroke="#555"/><circle cx="663" cy="82" r="3" fill="#7a8ba8" stroke="#555"/><use href="#dn" x="677" y="78"/>
<use href="#gb" x="689" y="70"/>
<use href="#gb" x="714" y="70" transform="translate(144 15) scale(.8)"/><path d="M712 84h16v4h-16z" fill="#fff" stroke="#333" stroke-dasharray="2 2"/>
<rect x="751" y="71" width="14" height="11" fill="#ddd" stroke="#555"/><path d="M752 78L758 73L765 71" stroke="#c8884a" stroke-width="2"/><path d="M755 85H761" stroke="#777" stroke-width="2"/><use href="#dn" x="772" y="78"/>
<rect x="806" y="73" width="11" height="11" fill="#e2e4e8" stroke="#aaa"/><path d="M813 75V82L809 78.500Z" fill="#333"/><path d="M809 74V83" stroke="#333"/>
<rect x="829" y="73" width="11" height="11" fill="#e2e4e8" stroke="#aaa"/><path d="M833 75V82L837 78.500Z" fill="#333"/><path d="M837 74V83" stroke="#333"/>
<rect x="852" y="81" width="11" height="3" fill="#c8cbd0"/>
<rect x="873" y="75" width="11" height="8" fill="none" stroke="#ccd" stroke-width="1.500"/><path d="M877 75V72H887V80H884" fill="none" stroke="#ccd" stroke-width="1.500"/>
<path d="M899 73L909 84M909 73L899 84" stroke="#e4e6ea" stroke-width="2.500"/>
<!-- side buttons -->
<g stroke="#666" fill="#b6b8bc"><rect x="899" y="125" width="22" height="22"/><rect x="899" y="149" width="22" height="22"/><rect x="899" y="173" width="22" height="22"/><rect x="899" y="197" width="22" height="22"/><rect x="899" y="221" width="22" height="22"/><rect x="899" y="245" width="22" height="22"/></g>
<path d="M902 136L910 128L918 136H916V144H904V136Z" fill="#f7c838" stroke="#8a4a00"/><rect x="909" y="138" width="3" height="6" fill="#a86"/>
<path d="M902 158H907V167H902Z" fill="#2da52d" stroke="#124"/><path d="M907 155H912V167H907Z" fill="#f5c518" stroke="#124"/><path d="M912 152H917V167H912Z" fill="#4a8ad8" stroke="#124"/>
<path d="M903 178H909L911 181H918L915 191H903Z" fill="#f7ca3a" stroke="#8a6a00"/>
<rect x="902" y="200" width="16" height="12" fill="#f4f4f4" stroke="#777"/><path d="M904 203H909M904 207H909M912 203H916M912 207H916" stroke="#d0a010" stroke-width="2"/><path d="M904 215H913M910 212L914 215L910 218" stroke="#1a3ec0" fill="none" stroke-width="1.500"/>
<use href="#gb" x="902" y="224"/>
<rect x="903" y="254" width="14" height="11" fill="#eee" stroke="#666"/><path d="M903 254L914 248L919 250L911 255" fill="#d8a878" stroke="#8a6a40"/><path d="M905 258H915M905 261H915" stroke="#888"/>
<!-- bottom toolbar -->
<path d="M9 770V790" stroke="#333" stroke-dasharray="1 2" stroke-width="1.500"/>
<g fill="none" stroke="#9a9ca0" stroke-width="2">
<circle cx="28" cy="781" r="1.500" fill="#9a9ca0"/>
<circle cx="51" cy="781" r="7"/><circle cx="51" cy="781" r="1" fill="#9a9ca0"/>
<path d="M67 788L81 773"/>
<circle cx="97" cy="781" r="6"/><path d="M97 773L105 781L97 789L89 781Z" stroke-width="1"/>
<path d="M112 773L128 789M112 789Q118 781 128 773"/>
<path d="M135 790L150 775M139 780L150 790"/>
<circle cx="172" cy="784" r="4"/><path d="M166 773L182 787"/>
<path d="M190 778L204 788M196 790L208 775"/>
<path d="M213 775L228 790M218 772L232 786"/>
<path d="M236 790V773H250"/>
<path d="M260 772V790M260 772H274" stroke-dasharray="2 2"/><circle cx="260" cy="773" r="2" fill="#9a9ca0"/><circle cx="273" cy="773" r="2" fill="#9a9ca0"/><circle cx="260" cy="789" r="2" fill="#9a9ca0"/>
<path d="M289 772V782M305 772V782M289 776H305M289 787H305"/>
<path d="M313 778H328M313 783H328M316 773V789M320 773V789M324 773V789" stroke-width="1"/>
<path d="M337 789H353V775ZM342 789Q342 784 346 783" stroke-width="1.500"/>
</g>
<use href="#sep" x="158" y="771"/><use href="#sep" x="282" y="771"/>
<path d="M358 778L364 773H374V784L368 789H358Z M358 778H368V789M368 778L374 773M358 789L364 784H374M364 773V784" fill="none" stroke="#222"/>
<rect x="378" y="769" width="22" height="22" fill="#a9abb0" stroke="#555"/>
<path d="M381 777L386 772H397V784L392 789H381Z" fill="#2f82e0" stroke="#123"/><path d="M381 777H392V789M392 777L397 772" fill="none" stroke="#cde"/>
<path d="M412 772L419 776V785L412 789L405 785V776Z" fill="#7ab4ea" stroke="#1e4a90"/><path d="M405 776L412 780L419 776M412 780V789" fill="none" stroke="#1e4a90"/>
<use href="#dn" x="427" y="781"/>
<path d="M442 775Q448 771 454 775V788H450V778H446V788H442Z" fill="#2f6fb0" stroke="#111" stroke-width=".7"/><path d="M443 778V788M453 778V788" stroke="#f5c518" stroke-dasharray="1 1" stroke-width="2"/>
<path d="M463 775H470V788H463Z" fill="#f5c518" stroke="#333"/><path d="M470 773H478V786H470Z" fill="#34a83a" stroke="#133"/><path d="M462 778L474 790M474 774L466 786" stroke="#e22" stroke-width="1.200"/>
<rect x="486" y="775" width="15" height="13" fill="#fff" stroke="#1e4a90"/><rect x="486" y="775" width="15" height="4" fill="#4f86d0"/>
<rect x="509" y="775" width="15" height="13" fill="#fff" stroke="#1e4a90"/><path d="M509 779H524M509 783H524M516 779V788" stroke="#1e4a90"/><rect x="509" y="775" width="15" height="3" fill="#4f86d0"/>
<!-- status icons -->
<path d="M818 810L824 810L821 806Z" fill="#444"/>
<path d="M902 806L910 799H915V805L907 812Z" fill="#f5c518" stroke="#8a6a00" transform="rotate(-6 908 805)"/><circle cx="911" cy="802" r="1" fill="#fff"/>
</svg>
</body></html>
